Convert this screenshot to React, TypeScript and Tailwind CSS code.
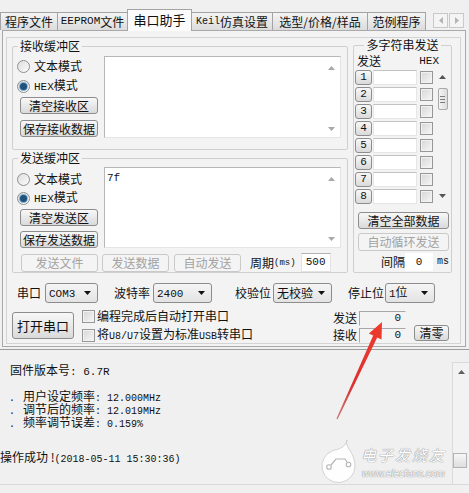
import React from 'react';

const mono = "font-['Liberation_Mono',monospace]";

type Dir = 'up' | 'down' | 'left' | 'right';

function Arrow({ dir, className = '' }: { dir: Dir; className?: string }) {
    const vertical = dir === 'up' || dir === 'down';
    const w = vertical ? 7 : 4;
    const h = vertical ? 4 : 7;
    const d =
        dir === 'up' ? 'M0 4L3.5 0L7 4Z' : dir === 'down' ? 'M0 0L7 0L3.5 4Z' : dir === 'left' ? 'M4 0L4 7L0 3.5Z' : 'M0 0L4 3.5L0 7Z';
    return (
        <svg width={w} height={h} viewBox={`0 0 ${w} ${h}`} className={className}>
            <path d={d} fill="currentColor" />
        </svg>
    );
}

function Tab({ w, children }: { w: string; children: React.ReactNode }) {
    return (
        <div
            className={`${w} -ml-px first:ml-0 h-[18px] flex items-center justify-center whitespace-nowrap border border-b-0 border-[#a3a3a3] bg-linear-to-b from-[#f4f4f4] to-[#dcdcdc]`}
        >
            {children}
        </div>
    );
}

function Btn({ children, className = '', disabled = false }: { children: React.ReactNode; className?: string; disabled?: boolean }) {
    return (
        <div
            className={`flex items-center justify-center whitespace-nowrap rounded-[3px] border ${
                disabled
                    ? 'border-[#c9c9c9] bg-[#f4f4f4] text-[#a2a2a2]'
                    : 'border-[#8d8d8d] bg-linear-to-b from-[#f8f8f8] to-[#dadada] text-[#111]'
            } ${className}`}
        >
            {children}
        </div>
    );
}

function Radio({ label, checked = false, className = '' }: { label: React.ReactNode; checked?: boolean; className?: string }) {
    return (
        <div className={`flex items-center h-[16px] ${className}`}>
            <span className="w-[13px] h-[13px] rounded-full border border-[#8e8f8f] bg-linear-to-br from-[#dedede] to-[#fbfbfb] flex items-center justify-center">
                {checked && <span className="w-[7px] h-[7px] rounded-full bg-[#1f527c] shadow-[0_0_0_1px_#7fb2d6]" />}
            </span>
            <span className="ml-[4px] whitespace-nowrap">{label}</span>
        </div>
    );
}

function Check({ className = '' }: { className?: string }) {
    return (
        <span
            className={`block w-[13px] h-[13px] border border-[#979797] bg-linear-to-br from-[#d6d6d6] to-[#f7f7f7] shadow-[inset_0_0_0_1px_#f2f2f2] ${className}`}
        />
    );
}

function Select({ children, className = '' }: { children: React.ReactNode; className?: string }) {
    return (
        <div
            className={`h-[20px] flex items-center justify-between pl-[3px] pr-[6px] rounded-[3px] border border-[#8c8c8c] bg-linear-to-b from-[#f5f5f5] to-[#e3e3e3] ${className}`}
        >
            <span className="whitespace-nowrap">{children}</span>
            <Arrow dir="down" className="text-[#111]" />
        </div>
    );
}

function TextBox({ children, className = '' }: { children?: React.ReactNode; className?: string }) {
    return (
        <div className={`flex bg-white border border-[#b7b7b7] border-r-[#e4e4e4] border-b-[#e4e4e4] ${className}`}>
            <div className={`flex-1 pl-[2px] pt-[5px] text-[11px] ${mono}`}>{children}</div>
            <div className="w-[17px] flex flex-col items-center justify-between pt-[9px] pb-[6px] text-[#a8a8a8]">
                <Arrow dir="up" />
                <Arrow dir="down" />
            </div>
        </div>
    );
}

function Counter() {
    return (
        <div className="w-[47px] h-[15px] flex items-center justify-end pr-[4px] border border-t-[#a8a8a8] border-l-[#a8a8a8] border-r-[#f3f3f3] border-b-[#f3f3f3] text-[11px]">
            <span className={mono}>0</span>
        </div>
    );
}

const hexLabel = (
    <>
        <span className={`${mono} text-[11px]`}>HEX</span>模式
    </>
);

export default function App() {
    const rows = [1, 2, 3, 4, 5, 6, 7, 8];

    return (
        <div className="relative w-[469px] h-[493px] overflow-hidden bg-[#f0f0f0] text-[12px] leading-none text-[#111] font-['Noto_Sans_CJK_SC',sans-serif]">
            {/* Tabs */}
            <div className="flex items-end h-[30px]">
                <Tab w="w-[58px]">程序文件</Tab>
                <Tab w="w-[71px]">
                    <span className={`${mono} text-[11px]`}>EEPROM</span>文件
                </Tab>
                <div className="relative z-10 -ml-px -mb-px w-[65px] h-[22px] flex items-center justify-center pb-[2px] border border-b-0 border-[#a3a3a3] bg-[#fbfbfb] text-[13px]">
                    串口助手
                </div>
                <Tab w="w-[82px]">
                    <span className={`${mono} text-[10px]`}>Keil</span>仿真设置
                </Tab>
                <Tab w="w-[96px]">选型/价格/样品</Tab>
                <Tab w="w-[59px]">范例程序</Tab>
                <div className="flex ml-[7px] mb-[2px]">
                    <div className="w-[15px] h-[15px] flex items-center justify-center border border-[#c9c9c9] bg-[#f4f4f4] text-[#b4b4b4]">
                        <Arrow dir="left" />
                    </div>
                    <div className="w-[15px] h-[15px] ml-[1px] flex items-center justify-center border border-[#c9c9c9] bg-[#f4f4f4] text-[#b4b4b4]">
                        <Arrow dir="right" />
                    </div>
                </div>
            </div>

            {/* Tab panel */}
            <div className="ml-[2px] w-[464px] h-[317px] border border-[#a9a9a9] bg-[#f3f3f3] pt-[6px] pl-[3px]">
                <div className="w-[455px] h-[307px] border border-[#d4d4d4]">
                    <div className="flex items-start ml-[5px] mt-[1px]">
                        <div className="w-[336px] flex flex-col">
                            {/* 接收缓冲区 */}
                            <fieldset className="h-[111px] border border-[#cfcfcf] rounded-[2px]">
                                <legend className="ml-[5px] px-[2px] h-[14px] leading-[14px]">接收缓冲区</legend>
                                <div className="flex">
                                    <div className="w-[91px] flex flex-col pl-[4px]">
                                        <Radio className="mt-[5px]" label="文本模式" />
                                        <Radio className="mt-[4px]" checked label={hexLabel} />
                                        <Btn className="mt-[3px] ml-[3px] w-[78px] h-[17px]">清空接收区</Btn>
                                        <Btn className="mt-[6px] ml-[3px] w-[78px] h-[17px]">保存接收数据</Btn>
                                    </div>
                                    <TextBox className="mt-[3px] w-[237px] h-[82px]" />
                                </div>
                            </fieldset>

                            {/* 发送缓冲区 */}
                            <fieldset className="mt-[1px] h-[122px] border border-[#cfcfcf] rounded-[2px]">
                                <legend className="ml-[5px] px-[2px] h-[14px] leading-[14px]">发送缓冲区</legend>
                                <div className="flex">
                                    <div className="w-[91px] flex flex-col pl-[4px]">
                                        <Radio className="mt-[6px]" label="文本模式" />
                                        <Radio className="mt-[3px]" checked label={hexLabel} />
                                        <Btn className="mt-[3px] ml-[3px] w-[78px] h-[17px]">清空发送区</Btn>
                                        <Btn className="mt-[5px] ml-[3px] w-[78px] h-[17px]">保存发送数据</Btn>
                                    </div>
                                    <TextBox className="mt-[2px] w-[237px] h-[81px]">7f</TextBox>
                                </div>
                                <div className="flex items-center mt-[5px] pl-[8px]">
                                    <Btn disabled className="w-[77px] h-[18px]">发送文件</Btn>
                                    <Btn disabled className="ml-[4px] w-[67px] h-[18px]">发送数据</Btn>
                                    <Btn disabled className="ml-[5px] w-[67px] h-[18px]">自动发送</Btn>
                                    <span className="ml-[9px] whitespace-nowrap">周期</span>
                                    <span className={`${mono} text-[9px] mt-[2px]`}>(ms)</span>
                                    <div className={`ml-[5px] w-[30px] h-[19px] flex items-center justify-center bg-white border border-[#e3e3e3] border-t-[#b3b3b3] text-[11px] ${mono}`}>
                                        500
                                    </div>
                                </div>
                            </fieldset>
                        </div>

                        {/* 多字符串发送 */}
                        <fieldset className="ml-[5px] -mt-[1px] w-[99px] h-[235px] border border-[#cfcfcf] rounded-[2px]">
                            <legend className="mx-auto px-[2px] h-[14px] leading-[14px]">多字符串发送</legend>
                            <div className="flex items-center justify-between h-[14px] mt-[2px] pl-[3px] pr-[12px]">
                                <span>发送</span>
                                <span className={`${mono} text-[11px]`}>HEX</span>
                            </div>
                            <div className="flex mt-[1px]">
                                <div className="flex flex-col">
                                    {rows.map(n => (
                                        <div key={n} className="flex items-center h-[17px]">
                                            <Btn className={`ml-[1px] w-[17px] h-[15px] text-[11px] ${mono}`}>{n}</Btn>
                                            <div className="ml-[1px] w-[44px] h-[15px] bg-white border border-[#e6e6e6] border-t-[#c2c2c2]" />
                                            <Check className="ml-[3px]" />
                                        </div>
                                    ))}
                                </div>
                                <div className="ml-[4px] w-[11px] flex flex-col items-center pt-[6px] pb-[7px] text-[#555]">
                                    <Arrow dir="up" />
                                    <div className="mt-[9px] w-[10px] h-[22px] rounded-[2px] border border-[#a9a9a9] bg-linear-to-r from-[#f4f4f4] to-[#dcdcdc] flex flex-col items-center justify-center gap-[2px]">
                                        <span className="block w-[5px] h-px bg-[#7d7d7d]" />
                                        <span className="block w-[5px] h-px bg-[#7d7d7d]" />
                                        <span className="block w-[5px] h-px bg-[#7d7d7d]" />
                                    </div>
                                    <div className="flex-1" />
                                    <Arrow dir="down" />
                                </div>
                            </div>
                            <Btn className="mt-[7px] ml-[4px] w-[91px] h-[17px]">清空全部数据</Btn>
                            <Btn disabled className="mt-[4px] ml-[4px] w-[91px] h-[18px]">自动循环发送</Btn>
                            <div className="flex items-center h-[18px] mt-[2px] pl-[27px]">
                                <span>间隔</span>
                                <div className={`w-[28px] h-[18px] flex items-center justify-center bg-white text-[11px] ${mono}`}>0</div>
                                <span className={`ml-[4px] text-[10px] ${mono}`}>ms</span>
                            </div>
                        </fieldset>
                    </div>

                    {/* 串口参数 */}
                    <div className="flex items-center h-[20px] mt-[10px] pl-[10px]">
                        <span className="w-[28px]">串口</span>
                        <Select className="w-[53px]">
                            <span className={`${mono} text-[11px]`}>COM3</span>
                        </Select>
                        <span className="ml-[16px] w-[39px]">波特率</span>
                        <Select className="w-[59px]">
                            <span className={`${mono} text-[11px]`}>2400</span>
                        </Select>
                        <span className="ml-[23px] w-[38px]">校验位</span>
                        <Select className="w-[59px]">无校验</Select>
                        <span className="ml-[16px] w-[37px]">停止位</span>
                        <Select className="w-[50px]">
                            <span className={`${mono} text-[11px]`}>1</span>位
                        </Select>
                    </div>

                    {/* 打开串口 / 计数 */}
                    <div className="flex mt-[5px]">
                        <Btn className="mt-[4px] ml-[5px] w-[62px] h-[27px] text-[13px]">打开串口</Btn>
                        <div className="ml-[8px] flex flex-col gap-[3px]">
                            <div className="flex items-center h-[16px]">
                                <Check />
                                <span className="ml-[2px] whitespace-nowrap">编程完成后自动打开串口</span>
                            </div>
                            <div className="flex items-center h-[16px]">
                                <Check />
                                <span className="ml-[2px] whitespace-nowrap">
                                    将<span className={`${mono} text-[10px]`}>U8/U7</span>设置为标准
                                    <span className={`${mono} text-[10px]`}>USB</span>转串口
                                </span>
                            </div>
                        </div>
                        <div className="ml-auto mr-[11px] flex items-end">
                            <div className="flex flex-col gap-[1px]">
                                <div className="flex items-center h-[16px]">
                                    <span className="w-[26px]">发送</span>
                                    <Counter />
                                </div>
                                <div className="flex items-center h-[16px]">
                                    <span className="w-[26px]">接收</span>
                                    <Counter />
                                </div>
                            </div>
                            <Btn className="ml-[8px] mb-[2px] w-[35px] h-[16px]">清零</Btn>
                        </div>
                    </div>
                </div>
            </div>

            {/* 状态信息 */}
            <div className="mt-[2px] h-[136px] flex border-t border-b border-t-[#9d9d9d] border-b-[#d9d9d9]">
                <div className="flex-1 pt-[14px]">
                    <div className="pl-[10px] h-[12px] leading-[12px] whitespace-nowrap">
                        固件版本号<span className={`${mono} text-[11px]`}>: 6.7R</span>
                    </div>
                    <div className="mt-[14px] flex flex-col gap-[1px] pl-[9px] leading-[12px]">
                        <div className="h-[12px] whitespace-nowrap">
                            <span className={`inline-block w-[14px] ${mono} text-[10px]`}>.</span>用户设定频率
                            <span className={`${mono} text-[10px]`}>: 12.000MHz</span>
                        </div>
                        <div className="h-[12px] whitespace-nowrap">
                            <span className={`inline-block w-[14px] ${mono} text-[10px]`}>.</span>调节后的频率
                            <span className={`${mono} text-[10px]`}>: 12.019MHz</span>
                        </div>
                        <div className="h-[12px] whitespace-nowrap">
                            <span className={`inline-block w-[14px] ${mono} text-[10px]`}>.</span>频率调节误差
                            <span className={`${mono} text-[10px]`}>: 0.159%</span>
                        </div>
                    </div>
                    <div className="mt-[23px] h-[12px] leading-[12px] whitespace-nowrap">
                        操作成功 !<span className={`${mono} text-[10px]`}>(2018-05-11 15:30:36)</span>
                    </div>
                </div>
                <div className="w-[17px] mt-[12px] flex flex-col border-l border-t border-[#dadada] bg-[#f2f2f2]">
                    <div className="h-[18px] flex items-center justify-center text-[#606060]">
                        <Arrow dir="up" />
                    </div>
                    <div className="flex-1" />
                    <div className="h-[15px] mb-[16px] mr-[2px] border border-[#b3b3b3] bg-linear-to-b from-[#f7f7f7] to-[#dedede]" />
                </div>
            </div>

            {/* 红色箭头与水印 */}
            <svg className="absolute inset-0 pointer-events-none" width="469" height="493" viewBox="0 0 469 493">
                <defs>
                    <linearGradient id="arr" x1="337" y1="419" x2="382" y2="322" gradientUnits="userSpaceOnUse">
                        <stop offset="0" stopColor="#b8282a" stopOpacity="0.6" />
                        <stop offset="0.35" stopColor="#de3030" />
                        <stop offset="1" stopColor="#ee3b2e" />
                    </linearGradient>
                </defs>
                <polygon
                    points="382,322 381.5,339.5 377.2,337.4 337.6,419.2 336.4,418.8 373.2,335.6 368.9,333.5"
                    fill="url(#arr)"
                />
                <path
                    d="M347 440 C 344 447, 355 452, 355 466 A 16.5 16.5 0 1 1 333 450.5 C 341 449, 346 446, 347 440 Z"
                    fill="#ffffff"
                    fillOpacity="0.92"
                    stroke="#c9c9c9"
                    strokeWidth="0.8"
                />
                <path d="M331 465 L336 459 L345 459 L347 462" fill="none" stroke="#b5b5b5" strokeWidth="1.2" />
                <circle cx="329" cy="467" r="2.3" fill="none" stroke="#b5b5b5" strokeWidth="1.1" />
                <circle cx="348.5" cy="464.5" r="2.3" fill="none" stroke="#b5b5b5" strokeWidth="1.1" />
            </svg>
            <div className="absolute left-[361px] top-[447px] pointer-events-none text-white italic text-[15px] tracking-[2px] [text-shadow:0_0_1px_#8a8a8a,0_0_1px_#8a8a8a]">
                电子发烧友
            </div>
            <div className="absolute left-[362px] top-[469px] pointer-events-none text-white text-[10px] italic [text-shadow:0_0_1px_#8a8a8a,0_0_1px_#8a8a8a] font-['Liberation_Sans',sans-serif]">
                www.elecfans.com
            </div>
        </div>
    );
}
